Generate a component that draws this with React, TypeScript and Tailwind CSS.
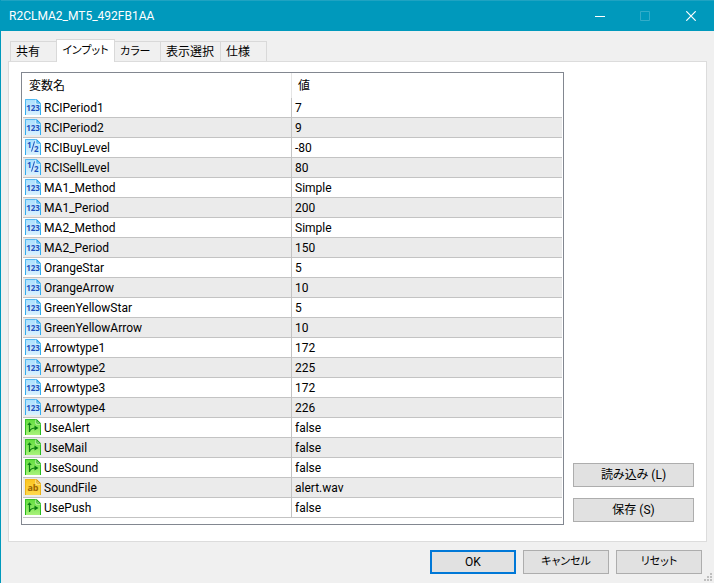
type Kind = "int" | "double" | "bool" | "string";

const params: { name: string; value: string; kind: Kind }[] = [
  { name: "RCIPeriod1", value: "7", kind: "int" },
  { name: "RCIPeriod2", value: "9", kind: "int" },
  { name: "RCIBuyLevel", value: "-80", kind: "double" },
  { name: "RCISellLevel", value: "80", kind: "double" },
  { name: "MA1_Method", value: "Simple", kind: "int" },
  { name: "MA1_Period", value: "200", kind: "int" },
  { name: "MA2_Method", value: "Simple", kind: "int" },
  { name: "MA2_Period", value: "150", kind: "int" },
  { name: "OrangeStar", value: "5", kind: "int" },
  { name: "OrangeArrow", value: "10", kind: "int" },
  { name: "GreenYellowStar", value: "5", kind: "int" },
  { name: "GreenYellowArrow", value: "10", kind: "int" },
  { name: "Arrowtype1", value: "172", kind: "int" },
  { name: "Arrowtype2", value: "225", kind: "int" },
  { name: "Arrowtype3", value: "172", kind: "int" },
  { name: "Arrowtype4", value: "226", kind: "int" },
  { name: "UseAlert", value: "false", kind: "bool" },
  { name: "UseMail", value: "false", kind: "bool" },
  { name: "UseSound", value: "false", kind: "bool" },
  { name: "SoundFile", value: "alert.wav", kind: "string" },
  { name: "UsePush", value: "false", kind: "bool" },
];

const tabs = [
  { label: "共有", style: "w-[47px] text-xs" },
  { label: "インプット", style: "w-[59px] text-[11px]" },
  { label: "カラー", style: "w-[47px] text-[11px]" },
  { label: "表示選択", style: "w-[61px] text-xs" },
  { label: "仕様", style: "w-[47px] text-xs" },
];

const palette = {
  int: { from: "#a9e0fd", to: "#d9f1fe", edge: "#29a9ee", fold: "#1c9be6", ink: "#1c50bd" },
  double: { from: "#a9e0fd", to: "#d9f1fe", edge: "#29a9ee", fold: "#1c9be6", ink: "#1c50bd" },
  bool: { from: "#5fdc3c", to: "#a9f27a", edge: "#22b81a", fold: "#22a416", ink: "#0b7d12" },
  string: { from: "#fbc41e", to: "#fdd94e", edge: "#eab010", fold: "#d99a08", ink: "#9c6400" },
};

function TypeIcon({ kind }: { kind: Kind }) {
  const c = palette[kind];
  const id = `page-${kind}`;
  return (
    <svg width="16" height="16" viewBox="0 0 16 16" className="shrink-0" aria-hidden="true">
      <defs>
        <linearGradient id={id} x1="0" y1="0" x2="0" y2="1">
          <stop offset="0" stopColor={c.from} />
          <stop offset="1" stopColor={c.to} />
        </linearGradient>
        <linearGradient id={`${id}-edge`} x1="0" y1="0" x2="0" y2="1">
          <stop offset="0" stopColor={c.edge} stopOpacity="0.7" />
          <stop offset="1" stopColor={c.edge} />
        </linearGradient>
      </defs>
      <path d="M0 0H11.5L16 4.5V16H0Z" fill={`url(#${id})`} />
      <path d="M.5 16V.5H11.3L15.5 4.7V16" fill="none" stroke={`url(#${id}-edge)`} />
      <path d="M11 .5V5H15.5" fill="none" stroke="#fff" strokeOpacity="0.7" />
      <path d="M11.5 0V4.5H16Z" fill={c.fold} />
      <path d="M12.5 2.3V3.7H13.9Z" fill="#fff" />
      {kind === "int" && (
        <text x="8" y="12" textAnchor="middle" fontFamily="Open Sans, sans-serif" fontSize="8" fontWeight="700" fill={c.ink}>
          123
        </text>
      )}
      {kind === "double" && (
        <>
          <text x="2" y="9" fontFamily="Open Sans, sans-serif" fontSize="8" fontWeight="700" fill={c.ink}>
            1
          </text>
          <path d="M9.5 2.5L6.5 12.5" stroke={c.ink} />
          <text x="9" y="13" fontFamily="Open Sans, sans-serif" fontSize="8" fontWeight="700" fill={c.ink}>
            2
          </text>
        </>
      )}
      {kind === "bool" && (
        <>
          <path d="M4.5 13V5M4.5 12.5C5.5 9.5 7 9 10.5 9" fill="none" stroke={c.ink} strokeWidth="1.2" />
          <path d="M2.2 6L4.5 3.3L6.8 6ZM9.5 6.5L13.5 9L9.5 11.5Z" fill={c.ink} />
        </>
      )}
      {kind === "string" && (
        <text x="8" y="12" textAnchor="middle" fontFamily="Open Sans, sans-serif" fontSize="9" fontWeight="700" fill={c.ink}>
          ab
        </text>
      )}
    </svg>
  );
}

function TitleBar() {
  return (
    <header className="flex h-[31px] items-center justify-between border-t border-[#1fa3c2] bg-[#0099bc] pl-2 text-white">
      <h1 className="text-xs">R2CLMA2_MT5_492FB1AA</h1>
      <div className="flex h-full">
        <button aria-label="最小化" className="flex w-[45px] items-center justify-center">
          <svg width="10" height="9" viewBox="0 0 10 9" fill="none" stroke="currentColor">
            <path d="M0 4.5H10" />
          </svg>
        </button>
        <button aria-label="最大化" disabled className="flex w-[46px] items-center justify-center text-[#33adc9]">
          <svg width="10" height="10" viewBox="0 0 10 10" fill="none" stroke="currentColor">
            <path d="M.5 .5H9.5V9.5H.5Z" />
          </svg>
        </button>
        <button aria-label="閉じる" className="flex w-[46px] items-center justify-center">
          <svg width="10" height="10" viewBox="0 0 10 10" fill="none" stroke="currentColor" strokeWidth="1.2">
            <path d="M.3 .3L9.7 9.7M9.7 .3L.3 9.7" />
          </svg>
        </button>
      </div>
    </header>
  );
}

function Tabs() {
  return (
    <div role="tablist" className="flex items-end pl-[2px]">
      {tabs.map((tab, i) =>
        i === 1 ? (
          <button
            key={tab.label}
            role="tab"
            aria-selected="true"
            className={`${tab.style} relative z-10 -mb-px -ml-px h-[23px] border border-b-0 border-[#d9d9d9] bg-white text-center whitespace-nowrap`}
          >
            {tab.label}
          </button>
        ) : (
          <button
            key={tab.label}
            role="tab"
            aria-selected="false"
            className={`${tab.style} -ml-px h-5 border border-b-0 border-[#d9d9d9] bg-[#f0f0f0] pt-px pl-[5px] text-left whitespace-nowrap first:ml-0`}
          >
            {tab.label}
          </button>
        )
      )}
    </div>
  );
}

function ParamTable() {
  return (
    <div className="flex-1 border border-[#828790] bg-white px-px pb-[6px]">
      <table className="w-full table-fixed border-separate border-spacing-0 text-left">
        <thead>
          <tr className="h-[25px]">
            <th className="w-[269px] border-r border-[#e5e5e5] pl-[6px] font-normal">変数名</th>
            <th className="pl-[6px] font-normal">値</th>
          </tr>
        </thead>
        <tbody>
          {params.map((p) => (
            <tr key={p.name} className="h-5 even:bg-[#ebebeb]">
              <td className="border-r border-b border-[#c3c3c3] p-0 pl-[2px]">
                <div className="flex h-[19px] items-start gap-[3px] pt-px">
                  <TypeIcon kind={p.kind} />
                  <span className="leading-[18px]">{p.name}</span>
                </div>
              </td>
              <td className="border-b border-[#c3c3c3] p-0 pt-px pl-[3px] leading-[18px]">{p.value}</td>
            </tr>
          ))}
        </tbody>
      </table>
    </div>
  );
}

export default function App() {
  const button = "h-6 border border-[#adadad] bg-[#e1e1e1]";

  return (
    <div className="flex min-h-screen flex-col border-l border-[#0099bc] bg-[#f0f0f0] font-[Roboto,'Noto_Sans_CJK_JP',sans-serif] text-xs text-black [font-feature-settings:'palt']">
      <TitleBar />

      <main className="flex flex-1 flex-col pt-2 pr-[7px] pl-[7px]">
        <Tabs />
        <section role="tabpanel" className="flex gap-[9px] border border-[#dcdcdc] bg-white px-3 pt-[10px] pb-4">
          <ParamTable />
          <div className="flex w-[121px] flex-col justify-end gap-[11px] pb-[3px]">
            <button className={button}>読み込み (L)</button>
            <button className={button}>保存 (S)</button>
          </div>
        </section>
      </main>

      <footer className="relative flex justify-end gap-[7px] pt-2 pr-3 pb-[9px]">
        <button className="h-6 w-[86px] border-2 border-[#0078d7] bg-[#e1e1e1]">OK</button>
        <button className={`${button} w-[86px] text-[11px]`}>キャンセル</button>
        <button className={`${button} w-[86px] text-[11px]`}>リセット</button>
        <svg className="absolute right-[2px] bottom-[2px]" width="8" height="8" viewBox="0 0 8 8" fill="#bfbfbf" aria-hidden="true">
          <path d="M6 0h2v2h-2zM3 3h2v2h-2zM6 3h2v2h-2zM0 6h2v2h-2zM3 6h2v2h-2zM6 6h2v2h-2z" />
        </svg>
      </footer>
    </div>
  );
}
